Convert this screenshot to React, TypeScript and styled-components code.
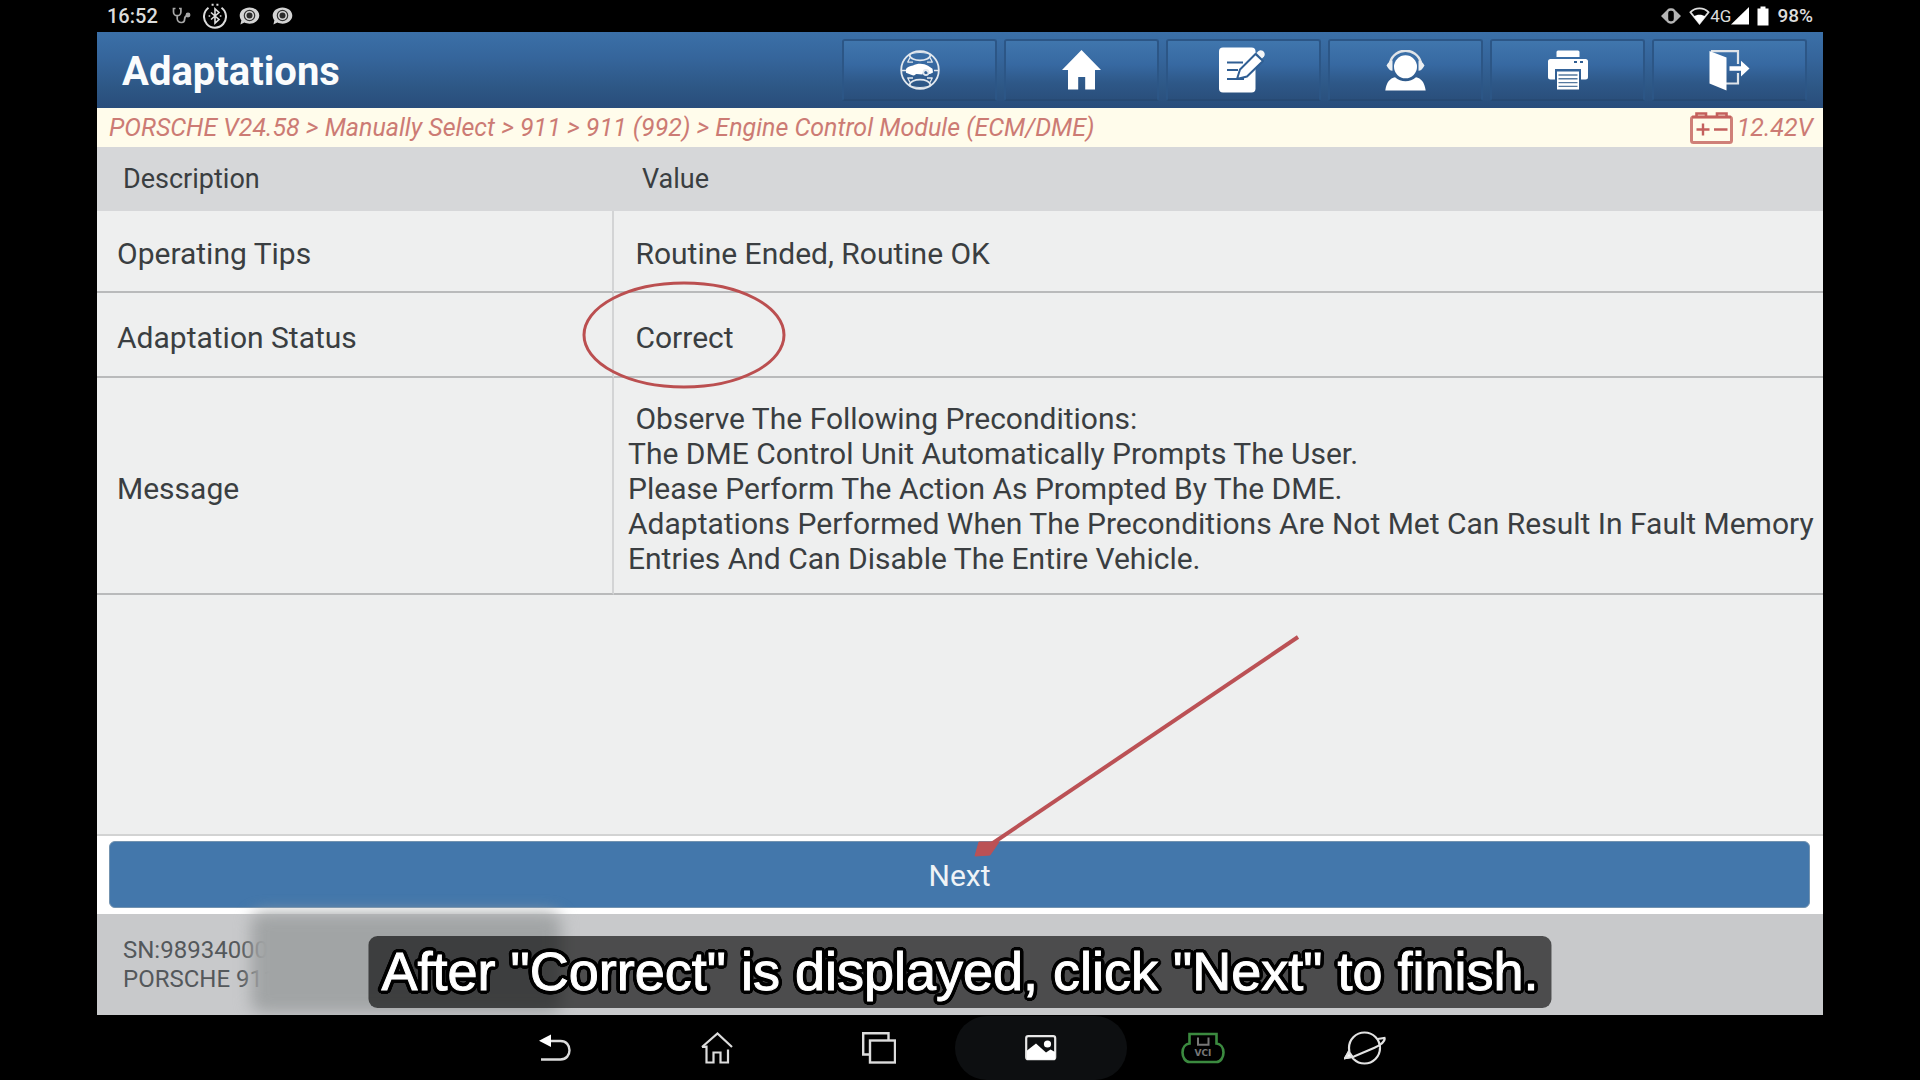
import React from "react";
import styled, { createGlobalStyle } from "styled-components";

const GlobalStyle = createGlobalStyle`
  *, *::before, *::after { box-sizing: border-box; }
  body {
    margin: 0;
    background: #000;
    font-family: Roboto, "Liberation Sans", sans-serif;
    color: #3a3e41;
  }
`;

const Device = styled.div`
  position: relative;
  min-height: 100vh;
  padding: 0 97px;
  display: flex;
  flex-direction: column;
  background: #000;
`;

const StatusBar = styled.div`
  height: 32px;
  padding: 0 10px;
  display: flex;
  justify-content: space-between;
  align-items: center;
  color: #dcdcdc;
  font-size: 20px;
  font-weight: 500;
  line-height: 32px;
`;

const StatusGroup = styled.div<{ $gap: number }>`
  display: flex;
  align-items: center;
  gap: ${(p) => p.$gap}px;
`;

const Clock = styled.span`
  margin-right: 2px;
`;

const Charge = styled.span`
  font-size: 19px;
`;

const Network = styled.span`
  display: flex;
  align-items: center;
  font-size: 17px;
  font-weight: 400;
`;

const Screen = styled.main`
  flex: 1;
  display: flex;
  flex-direction: column;
  background: #eeefef;
`;

const TitleBar = styled.header`
  height: 76px;
  padding: 0 16px 0 25px;
  display: flex;
  align-items: center;
  justify-content: space-between;
  background: linear-gradient(#3b70a8 0%, #35659b 35%, #2d5684 75%, #294d7b 100%);
`;

const Title = styled.h1`
  margin: 0;
  padding-top: 4px;
  color: #fafcfd;
  font-size: 40px;
  line-height: 48px;
  font-weight: 700;
`;

const Tools = styled.nav`
  display: flex;
  gap: 7px;
`;

const ToolButton = styled.button`
  width: 155px;
  height: 62px;
  padding: 0;
  display: flex;
  align-items: center;
  justify-content: center;
  border: 2px solid #2c5686;
  border-bottom-color: #274a74;
  border-radius: 3px;
  background: linear-gradient(#4076ad 0%, #3769a2 40%, #2e5888 72%, #2a4f7c 100%);
`;

const PathBar = styled.div`
  height: 39px;
  padding: 0 10px 0 12px;
  display: flex;
  justify-content: space-between;
  align-items: center;
  background: #fffceb;
  color: #cc7b74;
  font-size: 25px;
  line-height: 39px;
  font-style: italic;
`;

const Voltage = styled.span`
  display: flex;
  align-items: center;
  gap: 4px;
`;

const Table = styled.table`
  width: 100%;
  border-collapse: separate;
  border-spacing: 0;
  text-align: left;
  font-size: 30px;
  line-height: 35px;
`;

const HeadCell = styled.th<{ $indent: number }>`
  height: 64px;
  padding: 0 0 0 ${(p) => p.$indent}px;
  background: #d6d7d9;
  font-size: 27px;
  font-weight: 400;
`;

const Row = styled.tr<{ $height: number }>`
  height: ${(p) => p.$height}px;
`;

const NameCell = styled.th`
  width: 517px;
  padding: 5px 0 0 20px;
  border-right: 2px solid #d3d4d5;
  border-bottom: 2px solid #b9babb;
  font-weight: 400;
`;

const ValueCell = styled.td`
  position: relative;
  padding: 5px 0 0 14px;
  border-bottom: 2px solid #b9babb;
  white-space: pre-wrap;
`;

const Highlight = styled.svg`
  position: absolute;
  left: -33px;
  top: -14px;
`;

const ActionBar = styled.div`
  position: relative;
  margin-top: auto;
  height: 80px;
  padding: 5px 13px 6px 12px;
  border-top: 2px solid #d2d3d3;
  background: #fff;
`;

const NextButton = styled.button`
  width: 100%;
  height: 67px;
  padding: 1px 0 0;
  border: 1px solid #7393b0;
  border-radius: 6px;
  background: #4377ab;
  color: #eff3f6;
  font: 400 30px/35px Roboto, "Liberation Sans", sans-serif;
`;

const Pointer = styled.svg`
  position: absolute;
  left: calc(50% + 10px);
  bottom: 54px;
  pointer-events: none;
`;

const Footer = styled.footer`
  position: relative;
  height: 101px;
  padding: 22px 26px;
  background: #c8c9cb;
  color: #54585b;
  font-size: 24px;
  line-height: 29px;
`;

const Redaction = styled.div`
  position: absolute;
  left: 154px;
  top: -1px;
  width: 310px;
  height: 100px;
  border-radius: 12px;
  background: #a1a4a5;
  filter: blur(8px);
`;

const NavBar = styled.nav`
  position: relative;
  height: 65px;
  display: flex;
  justify-content: center;
  align-items: flex-start;
  padding-top: 1px;
  overflow: hidden;
  background: #000;
`;

const NavButton = styled.button<{ $active?: boolean }>`
  flex: none;
  width: 172px;
  height: 64px;
  margin: 0 -5px;
  padding: 0;
  display: flex;
  align-items: center;
  justify-content: center;
  border: 0;
  border-radius: 32px;
  background: ${(p) => (p.$active ? "#0d0f11" : "transparent")};
`;

/* Round black outline: shadows placed on a circle around each glyph. */
const outline = Array.from({ length: 24 }, (_, i) => {
  const a = (i * Math.PI) / 12;
  return `${(4 * Math.cos(a)).toFixed(2)}px ${(4 * Math.sin(a)).toFixed(2)}px 0 #000`;
}).join(", ");

const Caption = styled.p`
  position: absolute;
  left: 50%;
  bottom: 72px;
  transform: translateX(-50%);
  margin: 0;
  padding: 0 13px;
  height: 72px;
  border-radius: 9px;
  background: rgba(0, 0, 0, 0.62);
  color: #fff;
  font-family: "Liberation Sans", sans-serif;
  font-size: 54px;
  line-height: 70px;
  white-space: nowrap;
  -webkit-text-stroke: 1px #fff;
  text-shadow: ${outline};
`;

const Stethoscope = () => (
  <svg width="19" height="18" viewBox="0 0 19 18" fill="none" stroke="#a8a8a8" strokeWidth="1.7" aria-hidden="true">
    <path d="M3.5 1.5H1.5V5a3.7 3.7 0 0 0 7.4 0V1.5H7M5.2 9v2.5a4 4 0 0 0 4 4h.6c2.5 0 2.8-1.5 2.8-3.2 0-2 .8-3.3 2.6-3.7" />
    <circle cx="16" cy="8" r="1.6" fill="#a8a8a8" />
  </svg>
);

const BluetoothRing = () => (
  <svg width="24" height="26" viewBox="0 0 24 26" fill="none" stroke="#dcdcdc" strokeWidth="1.6" aria-hidden="true">
    <path d="M5.5 4.8a11 11 0 1 0 13 0" strokeWidth="2" />
    <path d="M8.6 1.8h2M13.4 1.8h2" strokeWidth="2" />
    <path d="M8 9.5l8 7-4 3.7V5.8l4 3.7-8 7M5.6 13h1.6M16.8 13h1.6" />
  </svg>
);

const Bubble = () => (
  <svg width="21" height="18" viewBox="0 0 21 18" aria-hidden="true">
    <path d="M10.5 .5c5.6 0 9.8 3.6 9.8 8.1s-4.2 8.100-9.8 8.100c-1.9 0-3.6-.3-5.1-1.1L1.4 17.5l1-4.2C1.300 12 .7 10.400.7 8.6.7 4.100 4.900.5 10.500.5z" fill="#d4d4d4" />
    <circle cx="10.500" cy="8.500" r="5.200" fill="none" stroke="#333" strokeWidth="1.200" />
    <circle cx="10.500" cy="8.500" r="3" fill="#2a2a2a" />
  </svg>
);

const Vibrate = () => (
  <svg width="20" height="16" viewBox="0 0 20 16" aria-hidden="true">
    <rect x="6" y="1.500" width="8" height="13" rx="3.500" fill="none" stroke="#b5b5b5" strokeWidth="2.400" />
    <path d="M5.500 2.500v11L0 8zM14.500 2.500v11L20 8z" fill="#b5b5b5" />
  </svg>
);

const Wifi = () => (
  <svg width="21" height="18" viewBox="0 0 21 18" aria-hidden="true">
    <path d="M1.500 5.200C6.500.200 14.500.200 19.500 5.200L10.500 16.500z" fill="none" stroke="#ddd" strokeWidth="1.800" />
    <path d="M4.800 9.500c3-2.500 8.400-2.500 11.400 0l-5.700 7.500z" fill="#fff" />
  </svg>
);

const Signal = () => (
  <svg width="18" height="18" viewBox="0 0 18 18" aria-hidden="true">
    <path d="M18 0v17.500H0z" fill="#fff" />
  </svg>
);

const Battery = () => (
  <svg width="12" height="20" viewBox="0 0 12 20" aria-hidden="true">
    <path d="M3.500 .5h5v2H11.500v17H.5v-17h3z" fill="#fff" />
  </svg>
);

const GlobeCar = () => (
  <svg width="40" height="40" viewBox="0 0 40 40" fill="none" stroke="#e2e8ee" strokeWidth="1.800" aria-hidden="true">
    <circle cx="20" cy="20" r="18.800" />
    <path d="M9.500 4.800c1 7.500 20 7.500 21 0M9.500 35.200c1-7.500 20-7.500 21 0" />
    <path d="M9 5.500c3-4 19-4 22 0M9 34.500c3 4 19 4 22 0" strokeWidth="1.200" />
    <path d="M7.500 12.500l2.500-5M32.500 12.500l-2.500-5M7.500 27.500l2.500 5M32.500 27.500l-2.500 5M7.500 12.200h5.500M32.500 12.200H27M7.500 28H13M32.500 28H27M1 20.500h5M34 20.500h5" strokeWidth="1.300" />
    <path d="M6 19c1-2 4-3 7-3.500 4-2.500 11-2.500 15 .3l4.500 3 .5 3.700-3 1.500h-1.500l-1.500-2.500-2-.5-2 1.500-.5 2-6-.5c-1 0-1.500 1.500-3 1.500s-2-1-3-1L6 22.800z" fill="#fff" stroke="none" />
    <circle cx="26" cy="22.500" r="2.600" strokeWidth="1.600" />
  </svg>
);

const House = () => (
  <svg width="39" height="40" viewBox="0 0 39 40" aria-hidden="true">
    <path d="M19.500 0L39 20h-6v19.500H23.200V27h-7v12.500H6V20H0z" fill="#fff" />
  </svg>
);

const Note = () => (
  <svg width="50" height="46" viewBox="0 0 50 46" aria-hidden="true">
    <rect x="0" y="0.500" width="36.500" height="45" rx="4" fill="#fff" />
    <path d="M8 15.500h16M8 23h11M8 32h17" stroke="#2f5e93" strokeWidth="2.200" />
    <path d="M18 32l3-9.500L36.500 7l7.500 7-16 15.500z" fill="#fff" stroke="#2f5e93" strokeWidth="2" strokeLinejoin="round" />
    <path d="M37.500 6l2-2c3.500-2.500 8 2 5.500 5.500l-2 2z" fill="#f4f6f8" />
  </svg>
);

const Support = () => (
  <svg width="41" height="41" viewBox="0 0 41 41" aria-hidden="true">
    <path d="M5 12.500C9.500-3.200 31.500-3.200 36 12.500" fill="none" stroke="#e0e4e8" strokeWidth="2.400" />
    <path d="M7.500 10.500c-2.500 0-4 1.500-6 5 2 3.600 3.500 5.300 6 5.300zM33.500 10.500c2.500 0 4 1.500 6 5-2 3.600-3.500 5.300-6 5.300z" fill="#eceff2" />
    <circle cx="20.500" cy="16.800" r="11.500" fill="#fff" />
    <path d="M.3 40.500C1.500 32 5 28.200 10 27.200c6 5.300 15 5.300 21 0 5 1 8.500 4.800 9.700 13.300z" fill="#fff" />
  </svg>
);

const Printer = () => (
  <svg width="40" height="40" viewBox="0 0 40 40" aria-hidden="true">
    <path d="M10 .5h20q1.500 0 1.500 1.500v5h-23V2q0-1.500 1.500-1.500z" fill="#fff" />
    <path d="M2.500 9h35Q40 9 40 11.500V27q0 2.500-2.500 2.500H33V19H7v10.500H2.500Q0 29.500 0 27V11.500Q0 9 2.500 9z" fill="#fff" />
    <path d="M26 12h3M32 12h3" stroke="#2f5e93" strokeWidth="2" />
    <path d="M9 21.500h22V39.500H9z" fill="#fff" />
    <path d="M10.500 25h19M10.500 28.800h19M10.500 32.600h19M10.500 36.400h19" stroke="#55799f" strokeWidth="1.400" />
  </svg>
);

const Exit = () => (
  <svg width="41" height="41" viewBox="0 0 41 41" aria-hidden="true">
    <path d="M2 1.200h27V14M29 23v10.500H17" fill="none" stroke="#dfe4e9" strokeWidth="2.200" />
    <path d="M.5 1l17 6.500v33L.5 33.500z" fill="#fff" />
    <path d="M20.500 16.200H32v-5.500l8.500 7.800-8.500 8V20.800H20.500z" fill="#fff" />
  </svg>
);

const CarBattery = () => (
  <svg width="43" height="32" viewBox="0 0 43 32" fill="none" stroke="#cf8078" aria-hidden="true">
    <rect x="1.500" y="5" width="40" height="25.500" rx="2" strokeWidth="3" />
    <path d="M6.500 4.500V1.500H16v3M27 4.500V1.500h9.500v3M2 5h39" stroke="#c4605d" strokeWidth="2.600" />
    <path d="M6.500 17.500h13M13 11.500v12M24 17.500h13.500" stroke="#c4605d" strokeWidth="2.400" />
  </svg>
);

const BackIcon = () => (
  <svg width="32" height="28" viewBox="0 0 32 28" aria-hidden="true">
    <path d="M10 7h11.500c12 0 12 18.500 0 18.500H2" fill="none" stroke="#dcdcdc" strokeWidth="2.400" />
    <path d="M0 6.800L12 .5v12.600z" fill="#fff" />
  </svg>
);

const HomeOutline = () => (
  <svg width="32" height="32" viewBox="0 0 32 32" fill="none" stroke="#dcdcdc" strokeWidth="2.200" aria-hidden="true">
    <path d="M1 15L16.500 1.500 31 15M5.500 13.500v17h7v-10h7v10h7.500V17.500M1 15h4.500" />
  </svg>
);

const Recents = () => (
  <svg width="34" height="32" viewBox="0 0 34 32" fill="none" stroke="#dcdcdc" strokeWidth="2.400" aria-hidden="true">
    <path d="M7 22.500H1.200V1.200H26.500V8" />
    <rect x="8" y="8.500" width="25" height="22" />
  </svg>
);

const Picture = () => (
  <svg width="32" height="26" viewBox="0 0 32 26" aria-hidden="true">
    <rect x="1.200" y="1.200" width="29" height="23" rx="2" fill="none" stroke="#e8e8e8" strokeWidth="2.200" />
    <path d="M2 15.500L11 8.500l10 9 4.500-3L30 17v7.500H2z" fill="#fff" />
    <circle cx="22.500" cy="9" r="3.600" fill="#fff" />
  </svg>
);

const VciText = styled.text`
  font: 700 9px "DejaVu Sans", sans-serif;
`;

const Vci = () => (
  <svg width="44" height="32" viewBox="0 0 44 32" fill="none" aria-hidden="true">
    <path d="M8.500 2h27v9.500c4 .5 7 4 7 9 0 5-3 9.500-7 9.500h-27c-4 0-7-4.500-7-9.500 0-5 3-8.500 7-9z" stroke="#3b8a3f" strokeWidth="2.600" />
    <path d="M17 5.500v7.300h10.500V5.500" stroke="#777" strokeWidth="2" />
    <VciText x="22" y="24" textAnchor="middle" fill="#777">VCI</VciText>
  </svg>
);

const Planet = () => (
  <svg width="42" height="36" viewBox="0 0 42 36" fill="none" stroke="#e2e2e2" strokeWidth="2.200" aria-hidden="true">
    <circle cx="20.500" cy="18" r="15.500" />
    <path d="M36 17L10 28.500 4 22z" fill="#000" stroke="none" />
    <path d="M33.500 9l7-1c1 3-4 7-10 9.700L10 26.500l-8.500 1.500 3.500-7" />
    <path d="M1 28l4-6 3.500 5z" fill="#fff" />
  </svg>
);

const tools = [
  { label: "Diagnostics", icon: <GlobeCar /> },
  { label: "Home", icon: <House /> },
  { label: "Feedback", icon: <Note /> },
  { label: "Support", icon: <Support /> },
  { label: "Print", icon: <Printer /> },
  { label: "Exit", icon: <Exit /> },
];

const navItems = [
  { label: "Back", icon: <BackIcon /> },
  { label: "Home screen", icon: <HomeOutline /> },
  { label: "Recent apps", icon: <Recents /> },
  { label: "Screenshots", icon: <Picture />, active: true },
  { label: "VCI", icon: <Vci /> },
  { label: "Browser", icon: <Planet /> },
];

const message = [
  " Observe The Following Preconditions:",
  "The DME Control Unit Automatically Prompts The User.",
  "Please Perform The Action As Prompted By The DME.",
  "Adaptations Performed When The Preconditions Are Not Met Can Result In Fault Memory Entries And Can Disable The Entire Vehicle.",
].join("\n");

export default function App() {
  return (
    <>
      <GlobalStyle />
      <Device>
        <StatusBar>
          <StatusGroup $gap={12}>
            <Clock>16:52</Clock>
            <Stethoscope />
            <BluetoothRing />
            <Bubble />
            <Bubble />
          </StatusGroup>
          <StatusGroup $gap={8}>
            <Vibrate />
            <Network>
              <Wifi />
              4G
              <Signal />
            </Network>
            <Battery />
            <Charge>98%</Charge>
          </StatusGroup>
        </StatusBar>

        <Screen>
          <TitleBar>
            <Title>Adaptations</Title>
            <Tools>
              {tools.map((t) => (
                <ToolButton key={t.label} type="button" aria-label={t.label}>
                  {t.icon}
                </ToolButton>
              ))}
            </Tools>
          </TitleBar>

          <PathBar>
            <span>PORSCHE V24.58 &gt; Manually Select &gt; 911 &gt; 911 (992) &gt; Engine Control Module (ECM/DME)</span>
            <Voltage>
              <CarBattery />
              12.42V
            </Voltage>
          </PathBar>

          <Table>
            <thead>
              <tr>
                <HeadCell scope="col" $indent={26}>Description</HeadCell>
                <HeadCell scope="col" $indent={28}>Value</HeadCell>
              </tr>
            </thead>
            <tbody>
              <Row $height={82}>
                <NameCell scope="row">Operating Tips</NameCell>
                <ValueCell>{" Routine Ended, Routine OK"}</ValueCell>
              </Row>
              <Row $height={85}>
                <NameCell scope="row">Adaptation Status</NameCell>
                <ValueCell>
                  {" Correct"}
                  <Highlight width="206" height="112" viewBox="0 0 206 112" aria-hidden="true">
                    <ellipse cx="103" cy="56" rx="100" ry="52" fill="none" stroke="#bb4f50" strokeWidth="3" />
                  </Highlight>
                </ValueCell>
              </Row>
              <Row $height={217}>
                <NameCell scope="row">Message</NameCell>
                <ValueCell>{message}</ValueCell>
              </Row>
            </tbody>
          </Table>

          <ActionBar>
            <NextButton type="button">Next</NextButton>
            <Pointer width="334" height="228" viewBox="0 0 334 228" aria-hidden="true">
              <path d="M328 5L20 213" stroke="#bb5155" strokeWidth="4" />
              <path d="M5 224L9 210h20l-9 13z" fill="#bb5155" stroke="#bb5155" strokeWidth="1" strokeLinejoin="round" />
            </Pointer>
          </ActionBar>

          <Footer>
            <div>SN:98934000</div>
            <div>PORSCHE 911</div>
            <Redaction />
          </Footer>
        </Screen>

        <NavBar>
          {navItems.map((n) => (
            <NavButton key={n.label} type="button" aria-label={n.label} $active={n.active}>
              {n.icon}
            </NavButton>
          ))}
        </NavBar>

        <Caption>After "Correct" is displayed, click "Next" to finish.</Caption>
      </Device>
    </>
  );
}
